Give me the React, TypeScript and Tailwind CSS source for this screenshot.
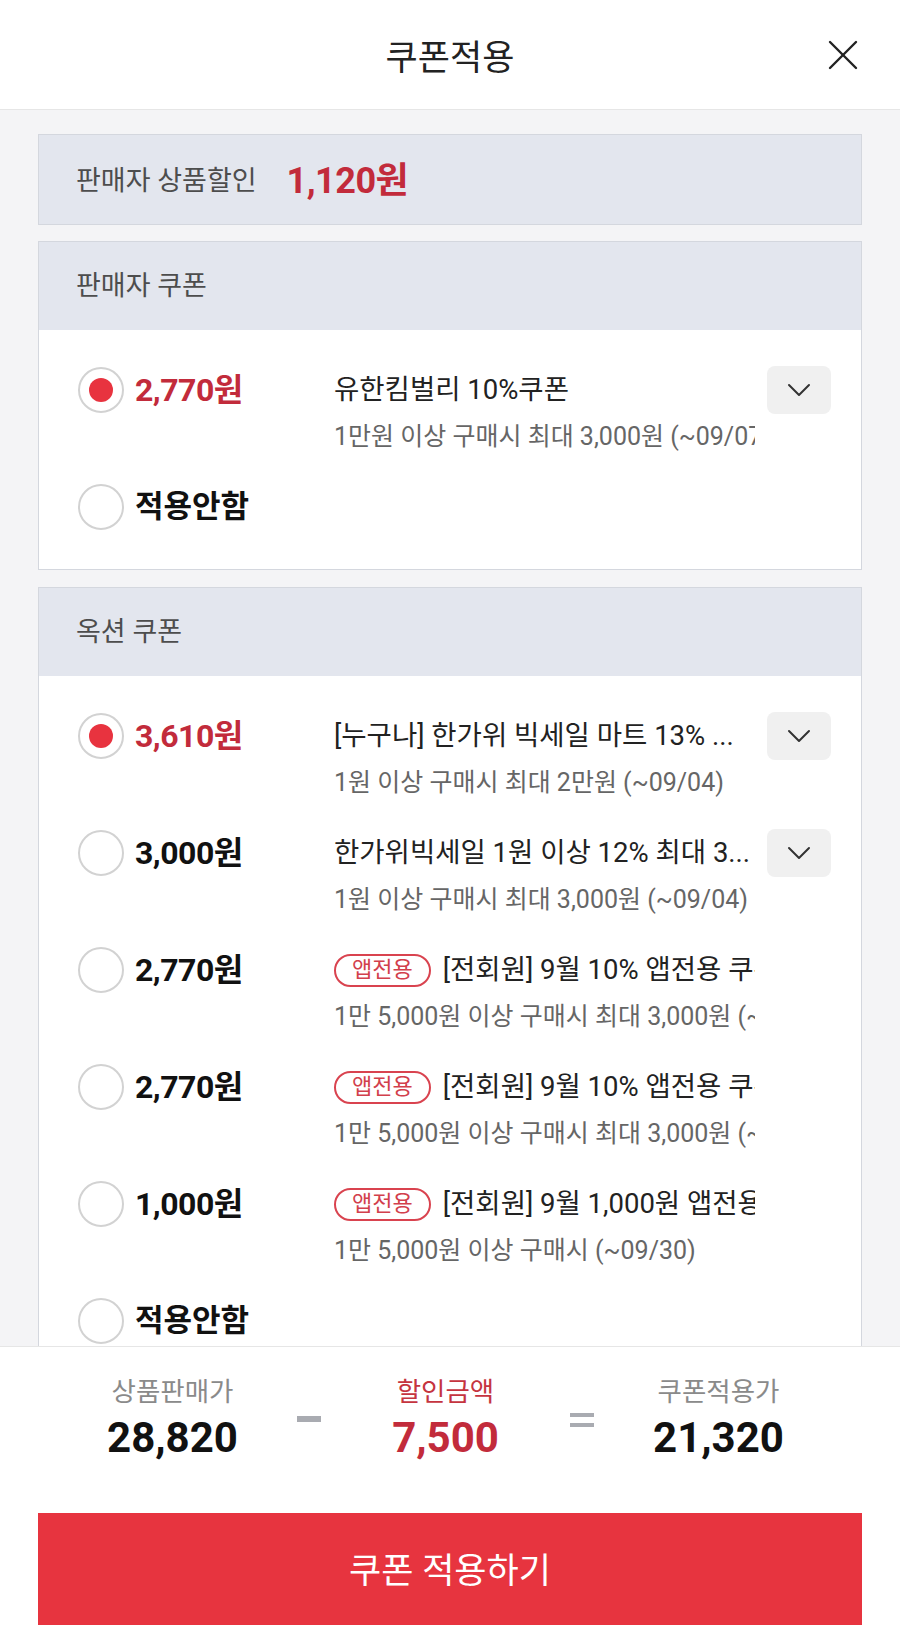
import React from 'react'

type Coupon = {
  amount: string
  title: string
  sub: string
  selected?: boolean
  badge?: boolean
  more?: boolean
}

const sellerCoupons: Coupon[] = [
  { amount: '2,770원', title: '유한킴벌리 10%쿠폰', sub: '1만원 이상 구매시 최대 3,000원 (~09/07)', selected: true, more: true },
]

const optionCoupons: Coupon[] = [
  { amount: '3,610원', title: '[누구나] 한가위 빅세일 마트 13% ...', sub: '1원 이상 구매시 최대 2만원 (~09/04)', selected: true, more: true },
  { amount: '3,000원', title: '한가위빅세일 1원 이상 12% 최대 3...', sub: '1원 이상 구매시 최대 3,000원 (~09/04)', more: true },
  { amount: '2,770원', title: '[전회원] 9월 10% 앱전용 쿠폰', sub: '1만 5,000원 이상 구매시 최대 3,000원 (~09/30)', badge: true },
  { amount: '2,770원', title: '[전회원] 9월 10% 앱전용 쿠폰', sub: '1만 5,000원 이상 구매시 최대 3,000원 (~09/30)', badge: true },
  { amount: '1,000원', title: '[전회원] 9월 1,000원 앱전용 쿠폰', sub: '1만 5,000원 이상 구매시 (~09/30)', badge: true },
]

function Radio({ checked }: { checked?: boolean }) {
  return (
    <div className="flex h-[46px] w-[46px] shrink-0 items-center justify-center rounded-full border-2 border-[#d2d2d2] bg-white">
      {checked && <div className="h-[24px] w-[24px] rounded-full bg-[#e8333f]" />}
    </div>
  )
}

function Chevron() {
  return (
    <button className="-mt-px flex h-[48px] w-[64px] shrink-0 items-center justify-center rounded-[8px] bg-[#f0f0f0]">
      <svg width="24" height="14" viewBox="0 0 24 14" fill="none">
        <polyline points="2,2 12,12 22,2" stroke="#333" strokeWidth="2" strokeLinejoin="round" strokeLinecap="round" />
      </svg>
    </button>
  )
}

function CouponRow({ c }: { c: Coupon }) {
  return (
    <div className="flex h-[117px] items-start">
      <Radio checked={c.selected} />
      <div
        className={
          c.selected
            ? 'w-[210px] shrink-0 pl-[11px] text-[32px] leading-[46px] font-bold tracking-[-0.5px] text-[#c22b3b]'
            : 'w-[210px] shrink-0 pl-[11px] text-[32px] leading-[46px] font-bold tracking-[-0.5px] text-[#111]'
        }
      >
        {c.amount}
      </div>
      <div className="w-[421px] shrink-0 overflow-hidden">
        <div className="flex h-[46px] items-center whitespace-nowrap text-[27.5px] text-[#222]">
          {c.badge && (
            <span className="mr-[12px] inline-flex h-[33px] shrink-0 items-center rounded-full border-2 border-[#d9434f] px-[16px] text-[22px] leading-none text-[#d2404c]">
              앱전용
            </span>
          )}
          <span>{c.title}</span>
        </div>
        <div className="mt-[8px] whitespace-nowrap text-[25px] leading-[32px] text-[#666]">{c.sub}</div>
      </div>
      {c.more && <div className="ml-[12px]"><Chevron /></div>}
    </div>
  )
}

function NoApply() {
  return (
    <div className="flex h-[46px] items-center">
      <Radio />
      <div className="pl-[11px] text-[31px] leading-[46px] font-bold text-[#111]">적용안함</div>
    </div>
  )
}

function Section({ label, coupons }: { label: string; coupons: Coupon[] }) {
  return (
    <div className="border border-[#d4d7de] bg-white">
      <div className="flex h-[88px] items-center bg-[#e3e6ee] pl-[37px] text-[27px] text-[#4d4d4d]">{label}</div>
      <div className="pt-[37px] pb-[39px] pl-[39px]">
        {coupons.map((c, i) => (
          <CouponRow key={i} c={c} />
        ))}
        <NoApply />
      </div>
    </div>
  )
}

export default function App() {
  return (
    <div className="flex h-[1649px] w-[900px] flex-col bg-white font-['Roboto','Noto_Sans_CJK_KR',sans-serif]">
      <header className="grid h-[110px] shrink-0 grid-cols-[1fr_auto_1fr] items-center border-b border-[#e6e6e6] bg-white">
        <div />
        <h1 className="mt-[10px] text-[35px] text-[#222]">쿠폰적용</h1>
        <div className="flex justify-end pr-[42px]">
          <svg width="30" height="30" viewBox="0 0 30 30" fill="none">
            <line x1="2" y1="2" x2="28" y2="28" stroke="#222" strokeWidth="2.4" strokeLinecap="round" />
            <line x1="28" y1="2" x2="2" y2="28" stroke="#222" strokeWidth="2.4" strokeLinecap="round" />
          </svg>
        </div>
      </header>

      <main className="flex-1 overflow-hidden bg-[#f4f4f6] px-[38px] pt-[24px]">
        <div className="flex h-[91px] items-center gap-[30px] border border-[#d4d7de] bg-[#e3e6ee] pl-[37px] pt-[3px]">
          <span className="text-[27px] text-[#4d4d4d]">판매자 상품할인</span>
          <span className="text-[36px] font-bold tracking-[-0.5px] text-[#c22b3b]">1,120원</span>
        </div>
        <div className="mt-[16px]">
          <Section label="판매자 쿠폰" coupons={sellerCoupons} />
        </div>
        <div className="mt-[17px]">
          <Section label="옥션 쿠폰" coupons={optionCoupons} />
        </div>
      </main>

      <footer className="h-[303px] shrink-0 border-t border-[#e6e6e6] bg-white">
        <div className="flex px-[36px] pt-[28px]">
          <div className="w-[273px] text-center">
            <div className="text-[26.5px] leading-[34px] text-[#8a8a8a]">상품판매가</div>
            <div className="mt-[4px] text-[42px] leading-[50px] font-bold text-[#111]">28,820</div>
          </div>
          <div className="flex w-0 justify-center pt-[41px]">
            <div className="h-[6px] w-[24px] shrink-0 bg-[#a9abb1]" />
          </div>
          <div className="w-[273px] text-center">
            <div className="text-[26.5px] leading-[34px] text-[#c5343f]">할인금액</div>
            <div className="mt-[4px] text-[42px] leading-[50px] font-bold text-[#c22b3b]">7,500</div>
          </div>
          <div className="flex w-0 justify-center pt-[38px]">
            <div className="flex shrink-0 flex-col gap-[6px]">
              <div className="h-[4px] w-[24px] bg-[#a9abb1]" />
              <div className="h-[4px] w-[24px] bg-[#a9abb1]" />
            </div>
          </div>
          <div className="w-[273px] text-center">
            <div className="text-[26.5px] leading-[34px] text-[#8a8a8a]">쿠폰적용가</div>
            <div className="mt-[4px] text-[42px] leading-[50px] font-bold text-[#111]">21,320</div>
          </div>
        </div>
        <div className="px-[38px] pt-[50px]">
          <button className="flex h-[112px] w-full items-center justify-center bg-[#e7343f] pt-[6px] text-[35px] text-white">
            쿠폰 적용하기
          </button>
        </div>
      </footer>
    </div>
  )
}
